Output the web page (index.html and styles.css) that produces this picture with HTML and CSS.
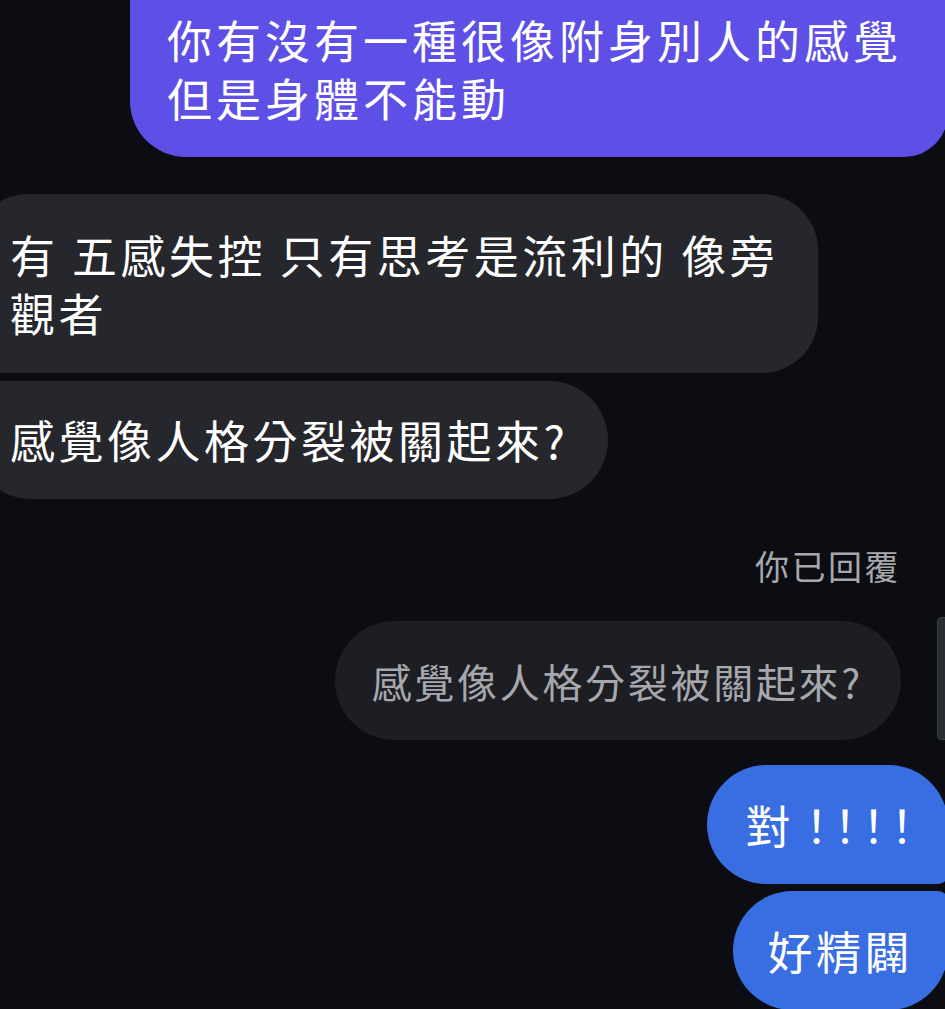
FILE: index.html
```html
<!DOCTYPE html>
<html lang="zh-Hant">
<head>
    <meta charset="UTF-8">
    <meta name="viewport" content="width=device-width, initial-scale=1.0">
    <title>聊天</title>
    <link rel="stylesheet" href="styles.css">
</head>
<body>
    <div class="thread">
        <!-- 自己送出的訊息 -->
        <div class="row row-out">
            <div class="bubble bubble-purple first-cut">你有沒有一種很像附身別人的感覺<br>但是身體不能動</div>
        </div>

        <!-- 對方訊息 -->
        <div class="group group-in">
            <div class="row row-in">
                <div class="bubble bubble-gray in-first">有 五感失控 只有思考是流利的 像旁<br>觀者</div>
            </div>
            <div class="row row-in">
                <div class="bubble bubble-gray in-last">感覺像人格分裂被關起來?</div>
            </div>
        </div>

        <!-- 回覆引用 -->
        <div class="reply-label">你已回覆</div>
        <div class="row row-quote">
            <div class="bubble bubble-quote">感覺像人格分裂被關起來?</div>
            <div class="quote-bar"></div>
        </div>

        <div class="group group-out">
            <div class="row row-out">
                <div class="bubble bubble-blue out-first">對<span class="bang">！！！！</span></div>
            </div>
            <div class="row row-out">
                <div class="bubble bubble-blue out-last">好精闢</div>
            </div>
        </div>
    </div>
</body>
</html>
```

FILE: styles.css
```css
html, body {
    margin: 0;
    padding: 0;
    background-color: #0b0d12;
    overflow: hidden;
}
body {
    font-family: "Noto Sans CJK TC", "Noto Sans", sans-serif;
    color: #fff;
}
.thread {
    display: flex;
    flex-direction: column;
    height: 1009px;
}
.row {
    display: flex;
}
.row-out {
    justify-content: flex-end;
    margin-right: -3px;
}
.row-in {
    justify-content: flex-start;
    margin-left: -28px;
}
.bubble {
    font-size: 45px;
    line-height: 58px;
    letter-spacing: 3.5px;
    padding: 30px 40px 30px 38px;
    border-radius: 56px;
    white-space: nowrap;
}
.bubble-purple {
    background-color: #5e4fe6;
    letter-spacing: 4px;
    padding: 30px 46px 30px 37px;
    border-radius: 0 0 44px 56px;
}
.first-cut {
    margin-top: -19px;
}
.group-in {
    margin-top: 37px;
    display: flex;
    flex-direction: column;
    gap: 8px;
}
.bubble-gray {
    background-color: #25272c;
}
.in-first {
    padding-top: 32px;
    padding-bottom: 31px;
    border-radius: 56px 56px 56px 10px;
}
.in-last {
    border-radius: 10px 59px 59px 59px;
}
.reply-label {
    margin-top: 47px;
    align-self: flex-end;
    margin-right: 44px;
    font-size: 34px;
    line-height: 40px;
    letter-spacing: 2.5px;
    color: #a6a8ad;
}
.row-quote {
    justify-content: flex-end;
    align-items: stretch;
    gap: 36px;
    margin-top: 35px;
}
.bubble-quote {
    background-color: #1c1e23;
    color: #a6a8ad;
    font-size: 40px;
    letter-spacing: 2.7px;
    padding: 31px 38px 30px 37px;
    border-radius: 60px;
}
.quote-bar {
    width: 7px;
    margin-top: -4px;
    background-color: #2a2d33;
    border: 1px solid #3d4047;
    border-right: none;
    border-radius: 5px 0 0 5px;
}
.group-out {
    margin-top: 25px;
    display: flex;
    flex-direction: column;
    gap: 7px;
}
.bubble-blue {
    background-color: #396de2;
    padding-top: 31px;
}
.out-first {
    border-radius: 60px 60px 10px 60px;
}
.out-last {
    padding-left: 34px;
    padding-right: 35px;
    border-radius: 60px 10px 60px 60px;
}
.bang {
    letter-spacing: -16.5px;
}
```
